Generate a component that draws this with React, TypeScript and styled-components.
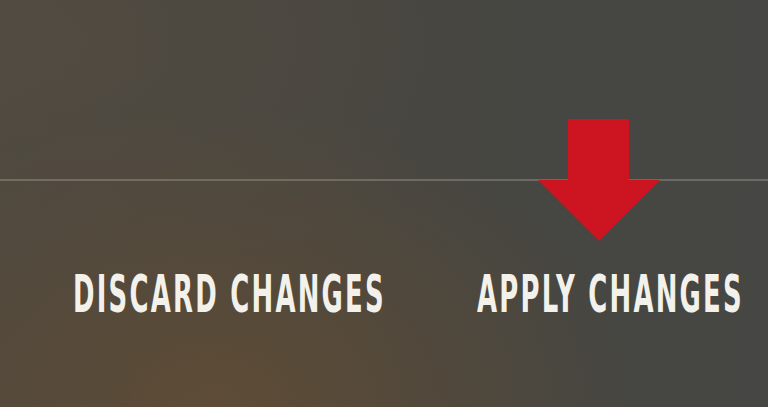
import * as React from 'react';
import styled, { createGlobalStyle } from 'styled-components';

const GlobalStyle = createGlobalStyle`
    html, body {
        margin: 0;
        padding: 0;
        background: #484743;
    }
`;

const Screen = styled.div`
    position: relative;
    width: 768px;
    height: 407px;
    overflow: hidden;
    display: flex;
    flex-direction: column;
    background:
        radial-gradient(ellipse 420px 300px at 28% 100%, rgba(96, 76, 52, 0.9) 0%, rgba(96, 76, 52, 0) 100%),
        radial-gradient(ellipse 500px 260px at 0% 10%, rgba(84, 76, 64, 0.7) 0%, rgba(84, 76, 64, 0) 100%),
        linear-gradient(90deg, #4c4840 0%, #474641 55%, #464644 100%);
`;

const TopArea = styled.div`
    height: 179px;
    flex-shrink: 0;
`;

const Divider = styled.div`
    height: 2px;
    background: rgba(140, 136, 126, 0.55);
    flex-shrink: 0;
`;

const Footer = styled.div`
    display: flex;
    align-items: flex-start;
    padding: 88px 0 0 73px;
`;

const ActionButton = styled.button<{ $width: number }>`
    width: ${p => p.$width}px;
    padding: 0;
    margin: 0;
    border: none;
    background: none;
    cursor: pointer;
    text-align: left;
    white-space: nowrap;
`;

const Label = styled.span`
    display: inline-block;
    font-family: "DejaVu Sans Condensed", "DejaVu Sans", sans-serif;
    font-weight: 700;
    font-size: 51px;
    line-height: 1;
    letter-spacing: 4px;
    color: #f3f1ec;
    transform: scaleX(0.564);
    transform-origin: left center;
`;

const Arrow = styled.svg`
    position: absolute;
    left: 538px;
    top: 119px;
    width: 122px;
    height: 122px;
`;

export default function App() {
    return (
        <>
            <GlobalStyle />
            <Screen>
                <TopArea />
                <Divider />
                <Footer>
                    <ActionButton $width={404}>
                        <Label>DISCARD CHANGES</Label>
                    </ActionButton>
                    <ActionButton $width={280}>
                        <Label>APPLY CHANGES</Label>
                    </ActionButton>
                </Footer>
                <Arrow viewBox="0 0 122 122">
                    <polygon points="30,0 91,0 91,61 122,61 61,122 0,61 30,61" fill="#cc1521" />
                </Arrow>
            </Screen>
        </>
    );
}
